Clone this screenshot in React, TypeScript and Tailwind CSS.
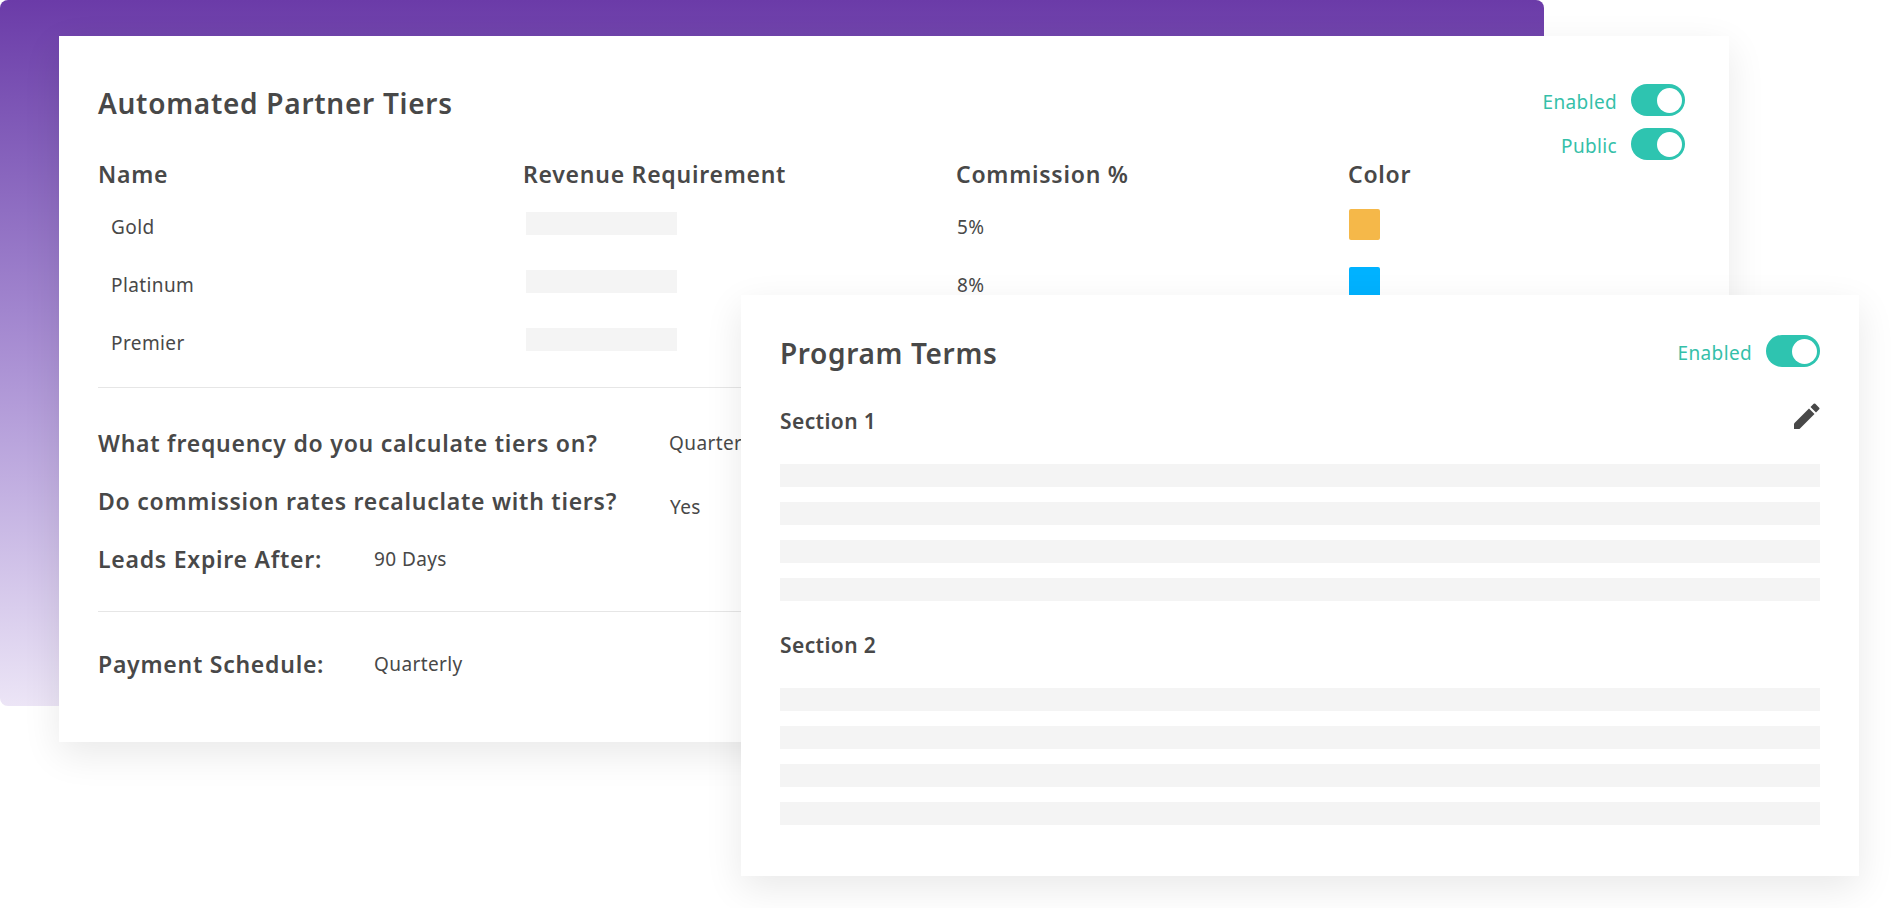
const font = "[font-family:'Noto_Sans',Lato,sans-serif]";

function Toggle() {
  return (
    <div className="flex h-[32px] w-[54px] items-center justify-end rounded-full bg-[#2ec4b0] pr-[3px]">
      <div className="h-[25px] w-[25px] rounded-full bg-white" />
    </div>
  );
}

function LabeledToggle({ label }: { label: string }) {
  return (
    <div className="flex items-center justify-end gap-[14px]">
      <span className="mt-[4px] text-[19px] leading-[24px] tracking-[0.35px] text-[#35bfa9]">{label}</span>
      <Toggle />
    </div>
  );
}

function Bar() {
  return <div className="h-[23px] w-full bg-[#f4f4f4]" />;
}

const tiers = [
  { name: "Gold", pct: "5%", color: "bg-[#f5b849]" },
  { name: "Platinum", pct: "8%", color: "bg-[#00b2ff]" },
  { name: "Premier", pct: "", color: "" },
];

const headClass = "mb-[10px] h-[28px] text-[23px] font-semibold leading-[28px] tracking-[0.75px]";

function QA({ q, a, w, shift }: { q: string; a: string; w: string; shift?: string }) {
  return (
    <div className="flex h-[58px] items-center">
      <div className={`${w} shrink-0 text-[23px] font-semibold tracking-[0.75px] text-[#484848]`}>{q}</div>
      <div className={`${shift ?? ""} text-[19px] tracking-[0.4px] text-[#484848]`}>{a}</div>
    </div>
  );
}

export default function App() {
  return (
    <div className={`relative h-[908px] w-[1895px] overflow-hidden bg-white ${font}`}>
      <div className="absolute left-0 top-0 h-[706px] w-[1544px] rounded-[8px] bg-gradient-to-b from-[#6b3ba8] via-[#a98fd3] to-[#ece5f6]" />

      <section className="absolute left-[59px] top-[36px] h-[706px] w-[1670px] bg-white pl-[39px] pr-[44px] pt-[48px] shadow-[0_12px_36px_rgba(0,0,0,0.09)]">
        <div className="flex h-[76px] items-start justify-between">
          <h1 className="text-[28px] font-semibold leading-[38px] tracking-[0.72px] text-[#484848]">Automated Partner Tiers</h1>
          <div className="flex flex-col gap-[12px]">
            <LabeledToggle label="Enabled" />
            <LabeledToggle label="Public" />
          </div>
        </div>

        <div className="grid grid-cols-[425px_433px_392px_1fr] text-[#484848]">
          <div className={headClass}>Name</div>
          <div className={headClass}>Revenue Requirement</div>
          <div className={headClass}>Commission %</div>
          <div className={headClass}>Color</div>
          {tiers.map((t) => (
            <div key={t.name} className="contents">
              <div className="flex h-[58px] items-center pl-[13px] pt-[1px] text-[19px] tracking-[0.4px]">{t.name}</div>
              <div className="flex h-[58px] items-center pl-[3px]">
                <div className="mb-[8px] h-[23px] w-[151px] bg-[#f4f4f4]" />
              </div>
              <div className="flex h-[58px] items-center pl-[1px] pt-[1px] text-[19px] tracking-[0.4px]">{t.pct}</div>
              <div className="flex h-[58px] items-center pl-[1px]">
                {t.color && <div className={`mb-[5px] h-[31px] w-[31px] rounded-[2px] ${t.color}`} />}
              </div>
            </div>
          ))}
        </div>

        <div className="mt-[15px] h-px bg-[#e6e6e6]" />

        <div className="mt-[26px]">
          <QA q="What frequency do you calculate tiers on?" a="Quarterly" w="w-[571px]" />
          <QA q="Do commission rates recaluclate with tiers?" a="Yes" w="w-[572px]" shift="mt-[12px]" />
          <QA q="Leads Expire After:" a="90 Days" w="w-[276px]" />
        </div>

        <div className="mt-[23px] h-px bg-[#e6e6e6]" />

        <div className="mt-[23px]">
          <QA q="Payment Schedule:" a="Quarterly" w="w-[276px]" />
        </div>
      </section>

      <section className="absolute left-[741px] top-[295px] h-[581px] w-[1118px] bg-white pl-[39px] pr-[39px] pt-[40px] shadow-[0_12px_36px_rgba(0,0,0,0.09)]">
        <div className="flex h-[36px] items-center justify-between">
          <h2 className="text-[28px] font-semibold leading-[36px] tracking-[0.65px] text-[#484848]">Program Terms</h2>
          <div className="-mt-[4px]">
            <LabeledToggle label="Enabled" />
          </div>
        </div>

        <div className="mt-[32px] flex h-[36px] items-start justify-between">
          <h3 className="text-[21px] font-semibold leading-[36px] tracking-[0.4px] text-[#484848]">Section 1</h3>
          <svg viewBox="0 0 26 26" className="h-[26px] w-[26px] fill-[#484848]">
            <path d="M0 20.5V26h5.5L20.5 11 15 5.5z" />
            <path d="M16.5 4l3.2-3.2q.8-.8 1.6 0l3.9 3.9q.8.8 0 1.6L22 9.5z" />
          </svg>
        </div>

        <div className="mt-[25px] flex flex-col gap-[15px]">
          <Bar />
          <Bar />
          <Bar />
          <Bar />
        </div>

        <h3 className="mt-[26px] h-[36px] text-[21px] font-semibold leading-[36px] tracking-[0.4px] text-[#484848]">Section 2</h3>

        <div className="mt-[25px] flex flex-col gap-[15px]">
          <Bar />
          <Bar />
          <Bar />
          <Bar />
        </div>
      </section>
    </div>
  );
}
